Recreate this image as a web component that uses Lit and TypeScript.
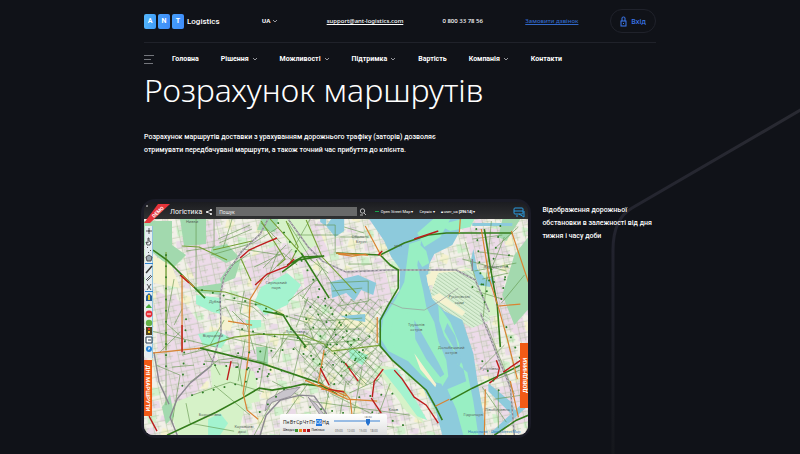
import { LitElement, html, css } from "lit";
import { customElement } from "lit/decorators.js";

interface NavItem { label: string; menu?: boolean }

const NAV: NavItem[] = [
  { label: "Головна" },
  { label: "Рішення", menu: true },
  { label: "Можливості", menu: true },
  { label: "Підтримка", menu: true },
  { label: "Вартість" },
  { label: "Компанія", menu: true },
  { label: "Контакти" },
];

const chevron = html`<svg class="chevron" viewBox="0 0 6 4" aria-hidden="true"><path d="M1 1l2 2 2-2" fill="none" stroke="currentColor" stroke-width=".8"/></svg>`;

/* Traffic map of the city, drawn as layers from ground up to labels. */
@customElement("traffic-map")
export class TrafficMap extends LitElement {
  static styles = css`
    :host { display: block; }
    svg { display: block; width: 100%; height: auto; }
    .water { fill: #8dcbdc; }
    .isle { fill: #98efc3; }
    .park { fill: #a3d9ae; }
    .mint { fill: #a4f3cf; }
    .lawn { fill: #d6f2c8; }
    .pink { fill: #eddbe9; }
    .sand { fill: #f5f2d0; }
    .pale { fill: #f2f0e8; }
    .lanes { fill: none; stroke: #5f9448; stroke-width: .7; opacity: .85; }
    .rail { fill: none; stroke: #8b8790; stroke-width: 1.4; }
    .dash { fill: none; stroke: #f4f1f2; stroke-width: .6; stroke-dasharray: 2 2; }
    .olive { fill: none; stroke: #74a035; stroke-width: 1.1; }
    .green { fill: none; stroke: #347d1b; stroke-width: 1.6; }
    .orange { fill: none; stroke: #d98332; stroke-width: 1.2; }
    .red { fill: none; stroke: #bd1d1c; stroke-width: 1.4; }
    .dots { fill: none; stroke: #2f7d28; stroke-width: 1.9; stroke-dasharray: .1 11; stroke-linecap: round; }
    text { font: 4px "Noto Sans", sans-serif; fill: #56665d; text-anchor: middle; }
    .credit { fill: #2877bd; }
  `;

  render() {
    return html`<svg viewBox="0 0 384 216" role="img" aria-label="Карта дорожнього трафіку">
      <defs>
        <pattern id="blocks" width="13" height="11" patternUnits="userSpaceOnUse" patternTransform="rotate(-12)">
          <path d="M0 3h13M5 0v11M10 3v8M5 8h8" fill="none" stroke="#91b17f" stroke-width=".5" opacity=".7"/>
          <rect x="6" y="4" width="3" height="3" fill="#dfdcd6"/>
        </pattern>
        <pattern id="dense" width="7" height="6" patternUnits="userSpaceOnUse" patternTransform="rotate(38)">
          <path d="M0 2h7M3 0v6" fill="none" stroke="#5c8a48" stroke-width=".7"/>
          <circle cx="3" cy="2" r=".8" fill="#2f7228"/>
        </pattern>
        <pattern id="mottle" width="31" height="27" patternUnits="userSpaceOnUse" patternTransform="rotate(9)">
          <path d="M2 3h9l2 6-8 3z" fill="#d2f1ce"/><path d="M17 2h8v6h-9z" fill="#eadbe8"/>
          <path d="M4 17l8-2 3 7-9 2z" fill="#eadce8"/><path d="M20 14l8 2-1 8-8-1z" fill="#f5f2cf"/>
        </pattern>
        <pattern id="hatch" width="3" height="3" patternUnits="userSpaceOnUse" patternTransform="rotate(35)">
          <path d="M0 1h3" stroke="#a9c9a5" stroke-width=".7"/>
        </pattern>
      </defs>
      <rect class="pale" width="384" height="216"/>
      <rect width="384" height="216" fill="url(#mottle)"/>
      <g class="pink">
        <path d="M40 2h28l8 20 12 24-12 32-22-12-12-24z"/>
        <path d="M100 42l32-16 22 10-18 22-26 14z"/><path d="M148 4l22-4 16 36-18 8-22-22z"/>
        <path d="M12 72l28 12 20 26-8 42-38 10z"/><path d="M18 130l38-6 22 20-30 34-24 10z"/>
        <path d="M184 52l56-2 8 28-20 16-44-6z"/><path d="M158 50l26 8v30l-22-8z"/>
        <path d="M318 8l38 2 8 28-34 8z"/><path d="M338 52l36 24 10 50-24-20z"/>
        <path d="M318 98l24 4 22 58-28-4z"/><path d="M84 134l28-4 16 26-38 8z"/>
        <path d="M348 170l28-8 8 40-28 8z"/><path d="M208 168l38 8 10 30-36-6z"/>
        <path d="M298 84l14-8 22 66-8 8zM330 100l12 2 10 44-14-2z"/>
      </g>
      <rect width="384" height="216" fill="url(#blocks)"/>
      <g class="lawn">
        <path d="M130 0h34l8 26-20 12z"/><path d="M320 48l22 6 12 42-18 2z"/>
        <path d="M66 144l44 8 6 30-46 10z"/><path d="M230 146l20 2 30 56-18-12z"/>
        <path d="M24 186l54-22 24 18-8 34H34z"/>
      </g>
      <g class="park">
        <path d="M0 2h28v24l14 10-14 14-28-24z"/><path d="M36 0h26v25l-22 2z"/>
        <path d="M68 28l15-3 12 13-13 6-16-9z"/><path d="M76 60l10-14 11-7-6 20-14 6z"/>
        <path d="M52 68l26-4-1 12-26-3z"/><path d="M117 0h17l-3 13-18-2z"/>
        <path d="M358 76l12-40 14-18v72l-14 16z"/><path d="M112 128h12v18l-11-4z"/>
        <path d="M18 188l8-13 4 22-8 8z"/><path d="M358 0h18l-14 22-8-4z"/>
      </g>
      <g class="mint">
        <path d="M52 76l25 3v16l-9-2-16-8z"/><path d="M110 84l7-16 26-14 14 12-14 20-22 10z"/>
        <path d="M54 115l19-3 12 6-8 11-18-3z"/><path d="M64 200l12-6 8 10-8 12H64z"/>
        <path d="M238 151l15-2 30 52-10-4-16-22z"/><path d="M204 128l20 8-6 10-12-7z"/>
        <path d="M101 101h16v7l-12 2z"/>
      </g>
      <g class="sand">
        <path d="M286 52l44-2 6 26-34 16-12-14z"/><path d="M6 35l22 12 8 22-27-5z"/>
        <path d="M196 92l27 2 8 12-28 4z"/><path d="M76 96l14 4-4 12-12-2z"/>
      </g>
      <path d="M286 76l8-22 34-3 18 50-18 8-34-19z" fill="#d9efd4"/>
      <path d="M286 76l8-22 34-3 18 50-18 8-34-19z" fill="url(#hatch)"/>
      <rect x="160" y="80" width="78" height="86" fill="url(#dense)" opacity=".55"/>
      <g class="water">
        <path d="M225 0L240 22 247 38 256 50 255 72 243 87 235 100 236 127 249 142 277 166 291 190 298 216H341L339 195 333 161 329 134 318 101 300 92 288 80 283 62 285 45 290 35 308 26 314 15 320 0z"/>
        <path d="M187 0h13v12l-9 6-9-11z"/><path d="M329 30l4 20 9 11 8-3-4 10-12-2-8-22z"/>
        <path d="M186 63l28-7 18 8-3 12-12-5-7 11-8-8-14 5z"/>
        <path d="M328 4h40v3h-40z"/><path d="M344 164l22 18 7 14-4 1-25-25z"/><path d="M376 186l6 2-28 26h-8z"/>
        <path d="M176 0h6v7l-6-4zM196 97l25-2v8l-12-2z"/>
      </g>
      <path d="M273 14l16-14h17l-10 18-16 10zM294 6l24-6h12l-4 8-20 4z" class="isle"/>
      <path class="isle" d="M265 25l12-4-4 25 6 26 3 16 8 15 4 19 8 19 2 16-6 10-5-14-16-20-8-16-7-18-10 4-5 10 6 16 12 7 12 10 9 16-8-5-14-15-20-10-8-13 3-20 12-18 9-18z"/>
      <path class="isle" d="M249 101l16-8 10 22 14 26 10 24-8-2-16-18-22-12-8-14z"/>
      <path class="isle" d="M274 24l8 8 3 12-7 4-6-10zM294 86l12 17 9 22-2 20 10 8 6 29 5 34h-15l-7-26-9-20 19-8-4-17-18-28-5-15z"/>
      <path class="water" d="M270 101l24 42 6 12-4 3-14-18-11-20zM303 104l8 13 6 25-3 8-4-20-10-18z"/>
      <path class="sand" d="M270 134l12 17 10 14-1 3-15-18zM282 56l7-3 1 12-6 2zM287 78l8-4 26 19-3 4z"/>
      <g class="lanes">
        <path d="M0 110l40 10 32 8M22 36v150M30 60l-8 44 20 18M52 0v70M88 0l-9 29M108 10l-33 14M106 6L74 20M67 36l42-12 26-16M38 136l24-6 14 26M46 163l28-22 24-3M60 142l34 2 4 24"/>
        <path d="M101 120l-7 42M123 124l-8 48M92 136l31 8M48 176l38-13 34 10M42 184l4 20 44 8M70 166l36 30M88 92l15 15 8 28M81 80l36 6M106 34l-18 12M134 32l-10 26M110 48l29-14 14 12M98 30l38 6"/>
        <path d="M117 4l20 20M144 4l24 38M166 0l-16 28M171 6h20v28M142 26l-23 23M152 16h42M148 30l-28 31M166 40l18 14M172 40l28 44M178 50l-20 30M196 18h24M200 8l20 6M204 45h24M182 64l42-2v20l-30 5M188 72l30-3"/>
        <path d="M321 23l12 44M335 33l34 4M330 52l42-8M318 40l44 12M347 2l-8 96M332 72l26 8M338 60l26-6M360 18l-18 44M374 8l-22 20M328 20l30-4M357 84l23-28M342 105l28 70M338 148l22-22M352 160l26-10M354 171v38M338 168l24 35M350 180l34-5"/>
        <path d="M136 119l30 4 13 23M128 139l16-22 36 6M106 150l-6 26M140 113l-6 30M150 128l20 22M160 112l-12 50M128 162l32 17M134 171l-24 45M173 151l12 28M164 164l-24 34M186 166l-10 50M202 162l-10 54M218 148l-12 66M235 160l-30 14M186 174l56 28M166 182l100 14M166 199l84 9M246 164l-16 43"/>
        <path d="M70 0v28l-28 4M80 101l-14 25M82 118l50 12M92 110l42 8M12 146l24 10-8 48M28 148l22-2M36 113l-20 20M38 90l-8 16M93 84l16 4 13 12M100 72l-4 22 10 5M72 92l10-4 8 16M144 82l30-22M130 93l34 11 6 18"/>
        <path d="M156 76l34 26M164 78l-12 30M172 92l20 34M196 101l-17 31M204 105l-24 22M218 104l-38 30M226 118l-36 24M230 131l-32 22M200 121l30 30M190 133l33 33M182 141l23 25M150 96l28 6 40-3M158 110h60M156 126l63-5"/>
      </g>
      <path class="rail" d="M124 0l-8 15-18 17-18 26-4 18 1 38-10 33-21 17-13 16-7 18 8 20M144 0l20 28 14 14 24 11 42-2h68l19 10 14 32M116 216l6-20 14-15 20-5 14 1 12 17 7 22M328 40v12M336 94l20 50 10 24 4 48M10 133l5 30 10 22"/>
      <path class="dash" d="M124 0l-8 15-18 17-18 26-4 18 1 38-10 33M144 0l20 28 14 14 24 11 42-2h68l19 10 14 32M336 94l20 50 10 24 4 48"/>
      <path d="M123 181l17-10 16-3-9 9-19 6-7 9zM164 178l9 8 11 15 4 14-6-10z" fill="#c9c5cc" stroke="#858088" stroke-width=".7"/>
      <g class="olive">
        <path d="M22 33v98M38 27l17 1 28 13M54 71l27 2 23 7 20 8 16 8M108 22l-39 9M54 130l36-12 26-3 43 1 21 9 8 7 49-6M97 40l10 22M117 2l24 38-8 7M142 2l12 26-8 16M162 1l16 37 34 36M126 0l36 40"/>
      </g>
      <path d="M242 82l16 7 22 2 14-8 20-14" fill="none" stroke="#9a9c9b" stroke-width=".7"/>
      <g class="green">
        <path d="M9 31l14 10 14 14 13 13 11 11M119 92l20 4 8 13 15 19M143 46l15-8 22-1M157 34l28 45M180 37l-26 4-16 12M192 34l44 2 24-12 24-8 18-2h66M236 36l10 10 8 5v18l-10 17-8 15 0 26 12 14 17 15 17 15 10 18 6 12M340 10l6 38 7 39 3 41M23 216l49-23 26-14 17-10 13 2 18-3 13-3 20 2 14 8M56 129l61 15 59 20 7 7M306 181l22-12 32-15 24-12M350 216l22-15 12-5"/>
      </g>
      <g class="orange">
        <path d="M38 56v75M8 134l48-5M105 102l1-22 13-21M105 101v31M105 132l-6 42 4 17 11 9M38 56l12 12M194 35l14 2 14-2M221 7l16 30M84 102l24 4M192 34l32 2M233 98v26M316 0l-1 14M367 12l17 51M337 10l8 50 8 25M353 87l23-2M180 131l-6 33 28 13M161 161l42 19 30 2M177 170l22 2 7 8 4 35M373 160l-10-40-9-32M340 216l1-46M291 187l14-7M374 198l-8-36"/>
      </g>
      <g class="red">
        <path d="M96 39l9-8 18-8 10-4M111 66l12-11 20-8 7-7M38 133v-27M87 142l-4 19M176 149l9 17M234 36l4-4M270 20l24-8M250 151l8 9 12 18 12 8 12 18M201 144l13 18M228 178l2-16 9-12M345 164l8-6 2-9-3-8M359 153l22-15M5 197l8 15M227 179l10 15M184 170l16 3M36 56l9 8"/>
      </g>
      <g class="dots">
        <path d="M22 36v116M42 100l-4 72M58 71l47 12 42 16M94 134l56-4 25 13M134 4l54 87M48 176l80-20M92 148l38 8M332 10l7 76M356 7l-17 82M328 68l34-8M357 80l8-46M147 110l24 32M182 128l48-12M178 148l48-10M190 165l32-38M215 178l37-4M228 193l31 13M60 145l82 7M98 110l36 8"/>
        <path d="M166 88l50 46M174 78l42 50M162 100l40 48M140 170l-32 30M166 188l46 8M202 96l-28 52M338 142l18 32M362 108l14 32"/>
      </g>
      <g>
        <text x="48" y="4">Нивки</text><text x="132" y="65">Сирецький</text><text x="132" y="70">парк</text>
        <text x="71" y="84">Дубки</text><text x="69" y="118">Відрадний</text><text x="151" y="114">Лук’янівка</text>
        <text x="216" y="19">Оболонь</text><text x="217" y="24">Берег</text><text x="315" y="79">Русанівські</text><text x="315" y="85">сади</text>
        <text x="272" y="107">Труханів</text><text x="272" y="112">острів</text><text x="307" y="130">Долобецький</text><text x="307" y="135">острів</text>
        <text x="352" y="49">Воскресенка</text><text x="345" y="151">Русанівка</text><text x="353" y="192">Лівобережна</text><text x="329" y="197">Гідропарк</text>
        <text x="254" y="28">міст</text><text x="249" y="192">Клов</text><text x="100" y="209">Караваєві</text><text x="98" y="214">дачі</text><text x="66" y="197">Борщагівка</text>
        <text class="credit" x="350" y="214">Надіслати · OpenStreetMap</text>
      </g>
    </svg>`;
  }
}

@customElement("app-root")
export class AppRoot extends LitElement {
  static styles = css`
    :host { display: block; font-family: Roboto, "Noto Sans", sans-serif; color: #fff; }
    * { box-sizing: border-box; }
    a { color: inherit; text-decoration: none; }
    button, input { font: inherit; color: inherit; margin: 0; padding: 0; border: 0; background: none; }
    .page { position: relative; min-height: 100vh; padding: 0 18% 15px; background: #101218; overflow: hidden; }
    .route { position: absolute; top: 0; right: 0; width: 200px; height: 454px; }
    .wrap { position: relative; }
    .top { display: grid; grid-template-columns: 118fr 65fr 116fr 83fr 85fr 46fr; align-items: center; height: 43px; border-bottom: 1px solid #20222a; font: 500 6px "Noto Sans", sans-serif; }
    .top > * { min-width: 0; white-space: nowrap; justify-self: start; }
    .logo { display: flex; align-items: center; gap: 2px; font-family: Roboto, sans-serif; font-size: 8px; font-weight: 500; }
    .tile { display: grid; place-items: center; width: 12px; height: 15px; border-radius: 2px; background: linear-gradient(100deg, #55b6fa, #3e9bf8); font-size: 7px; font-weight: 700; }
    .tile + .tile { background: linear-gradient(100deg, #459df8, #3f8cfa); }
    .name { margin-left: 1px; }
    .top .lang { display: flex; align-items: center; gap: 2px; font-weight: 700; }
    .chevron { width: 6px; height: 4px; color: #bbbdc2; }
    .mail { text-decoration: underline; }
    .call { color: #3269c9; text-decoration: underline; }
    .top .login { display: flex; align-items: center; justify-content: center; gap: 4px; justify-self: stretch; height: 24px; border: 1px solid #20222b; border-radius: 12px; color: #3c7af2; font-size: 7px; }
    .lock { width: 7px; height: 11px; }
    .nav { display: flex; align-items: center; gap: 22px; height: 32px; font-size: 7px; font-weight: 700; white-space: nowrap; }
    .burger { display: grid; gap: 3px; width: 10px; margin-right: -4px; }
    .burger i { height: 1px; background: #74767c; }
    .burger i:nth-child(2) { width: 7px; }
    .burger i:nth-child(3) { width: 9px; }
    .item { display: flex; align-items: center; gap: 3px; }
    h1 { margin: 0; font: 300 32px/30px "Noto Sans", sans-serif; }
    .lead { margin: 26px 0 42px; max-width: 312px; font-size: 7px; line-height: 13px; font-weight: 500; }
    .demo { display: grid; grid-template-columns: 77fr 23fr; gap: 11px; margin: 0 -3px; }
    .frame { border: 3px solid #1b1c27; border-radius: 14px; background: #1b1c27; }
    .screen { position: relative; overflow: hidden; border-radius: 9px; background: #222; }
    .caption { margin: 5px 0 0; font-size: 7px; line-height: 13px; font-weight: 500; }
    .bar { display: flex; align-items: center; height: 17px; padding: 2px 3px 0 26px; background: linear-gradient(#1b1c20, #303132); font-size: 4px; white-space: nowrap; }
    .brand { font-size: 7px; margin-right: 4px; }
    .share { width: 6px; height: 6px; margin-right: 4px; }
    .search { flex: 1 1 0; min-width: 0; height: 9px; padding: 0 3px; background: #686969; font-size: 5px; }
    .search::placeholder { color: #eee; opacity: 1; }
    .find { width: 8px; height: 8px; margin: 0 8px 0 2px; }
    .line { width: 4px; height: 1px; background: #15a34a; margin-right: 2px; }
    .pick { margin-right: 6px; }
    .bus { width: 12px; height: 12px; margin-left: 38px; }
    .ribbon { position: absolute; top: 0; left: 0; width: 26px; height: 26px; }
    .ribbon text { font: 700 5px Roboto, sans-serif; fill: #fff; }
    .tools { position: absolute; left: 1px; top: 24px; width: 8px; height: 132px; }
    .tab { position: absolute; display: grid; place-items: center; width: 8px; background: #f15a16; font-size: 6px; font-weight: 700; writing-mode: vertical-rl; white-space: nowrap; }
    .left { left: 0; bottom: 19px; height: 56px; }
    .right { right: 0; bottom: 27px; height: 65px; transform: rotate(180deg); }
    .week { position: absolute; left: 136px; bottom: 0; width: 107px; height: 21px; padding: 2px 3px; border-radius: 2px 2px 0 0; background: linear-gradient(#fff, #dedfdf); color: #222; font-size: 5px; display: grid; grid-template-columns: 46px 1fr; gap: 3px; }
    .days { display: flex; justify-content: space-between; line-height: 7px; margin-top: 3px; }
    .on { background: #2379df; color: #fff; }
    .scale { display: flex; align-items: center; gap: 1px; font-size: 3px; line-height: 4px; margin-top: 2px; }
    .scale i { width: 3px; height: 3px; }
    .fast { background: #3c932e; } .mid { background: #ee8521; } .slow { background: #df2e20; } .jam { background: #a51220; }
    .slider { width: 50px; height: 17px; }
    .slider text { font: 3px "Noto Sans", sans-serif; fill: #666; }
  `;

  private tools() {
    return html`<svg class="tools" viewBox="0 0 8 132" aria-hidden="true">
      <path d="M0 0h8v132H0z" fill="#e6edf0"/><path d="M7.500 0v132" stroke="#8fc3df"/>
      <g fill="none" stroke="#333" stroke-width=".8">
        <path d="M4 2v6M1 5h6M3 5h2"/><path d="M3 17v-5h1v3l2 1-1 3H2l-1-3z"/><path d="M2 21l1 1M5 24l1 1M3 26l1 1"/>
        <path d="M4 29l3 2-1 4H2l-1-4z" fill="#9ca8b0"/><path d="M1 47l6-7" stroke-width="1.5"/><path d="M1 54l5-5M2 55l5-5"/><path d="M2 58l4 6M6 58l-4 6"/>
      </g>
      <path d="M0 37h8v1H0zM0 65h8v1H0z" fill="#2c83d1"/>
      <path d="M1 70l3-3 3 3v5H1z" fill="#285f96"/><path d="M3 69h2v5H3z" fill="#efca37"/>
      <path d="M1 81l3-3 3 4H1z" fill="#49ae3e"/><circle cx="4" cy="88" r="3.4" fill="#e72f37"/><path d="M2 88h4" stroke="#fff"/>
      <circle cx="4" cy="97" r="3.2" fill="#64b144"/><path d="M1 101h6v8H1z" fill="#50421e"/><path d="M3 102h2v2H3z" fill="#eb2b20"/><path d="M3 105h2v2H3z" fill="#f4cb2c"/>
      <path d="M1 111h6v6H1z" fill="#fff" stroke="#25394c"/><path d="M3 114h3" stroke="#25394c"/><circle cx="4" cy="123" r="3" fill="#2886d8"/><path d="M4 120l1 3-2 1z" fill="#fff"/>
    </svg>`;
  }

  render() {
    return html`<div class="page">
      <svg class="route" viewBox="0 0 200 454" aria-hidden="true">
        <defs><linearGradient id="fade" x1="0" y1="0" x2="0" y2="1"><stop offset="0" stop-color="#292a32"/><stop offset=".4" stop-color="#22232e"/><stop offset="1" stop-color="#15171c"/></linearGradient></defs>
        <path d="M204 108L32 208Q13 219 13 250V454" fill="none" stroke="url(#fade)" stroke-width="3"/>
      </svg>
      <div class="wrap">
        <header>
          <div class="top">
            <a class="logo" href="#"><span class="tile">A</span><span class="tile">N</span><span class="tile">T</span><span class="name">Logistics</span></a>
            <button class="lang" type="button">UA ${chevron}</button>
            <a class="mail" href="mailto:support@ant-logistics.com">support@ant-logistics.com</a>
            <a href="tel:0800337856">0 800 33 78 56</a>
            <a class="call" href="#">Замовити дзвінок</a>
            <button class="login" type="button"><svg class="lock" viewBox="0 0 7 11" fill="none" stroke="currentColor" aria-hidden="true"><rect x="1" y="5" width="5" height="5"/><path d="M2 5V2q0-1 1.500-1T5 2v3M3.500 7v1"/></svg>Вхід</button>
          </div>
          <nav class="nav">
            <button class="burger" type="button" aria-label="Меню"><i></i><i></i><i></i></button>
            ${NAV.map((n) => html`<a class="item" href="#">${n.label}${n.menu ? chevron : ""}</a>`)}
          </nav>
        </header>
        <main>
          <h1>Розрахунок маршрутів</h1>
          <p class="lead">Розрахунок маршрутів доставки з урахуванням дорожнього трафіку (заторів) дозволяє отримувати передбачувані маршрути, а також точний час прибуття до клієнта.</p>
          <section class="demo">
            <div class="frame"><div class="screen">
              <div class="bar">
                <span class="brand">Логістика</span>
                <svg class="share" viewBox="0 0 6 6" aria-hidden="true"><path d="M5 1L1 3l4 2" fill="none" stroke="#fff" stroke-width=".7"/><g fill="#fff"><circle cx="5" cy="1" r="1"/><circle cx="1" cy="3" r="1"/><circle cx="5" cy="5" r="1"/></g></svg>
                <input class="search" type="text" placeholder="Пошук" aria-label="Пошук"/>
                <svg class="find" viewBox="0 0 8 8" fill="none" stroke="#ddd" aria-hidden="true"><circle cx="3.500" cy="3" r="2.200" stroke-width=".8"/><path d="M5 5l2 2M1 7h3" stroke-width=".8"/></svg>
                <i class="line"></i><span class="pick">Open Street Map ▾</span><span class="pick">Сервіс ▾</span><span>🔒︎ user_ua <b>[29614]</b> ▾</span>
                <svg class="bus" viewBox="0 0 12 12" fill="none" stroke="#2a9be0" aria-hidden="true"><rect x="1" y="2" width="9" height="6" rx="1"/><path d="M1 5h9M3 10h2M6 8l5 3V5"/></svg>
              </div>
              <traffic-map></traffic-map>
              <svg class="ribbon" viewBox="0 0 26 26" aria-hidden="true"><path d="M14 2h12L6 21H0z" fill="#e6343a"/><path d="M2 4h2" stroke="#ddd"/><text transform="translate(10 16) rotate(-43)">DEMO</text></svg>
              ${this.tools()}
              <button class="tab left" type="button">ДНІ МАРШРУТИ</button>
              <button class="tab right" type="button">ДОВІДНИКИ</button>
              <div class="week">
                <div>
                  <div class="days"><span>Пн</span><span>Вт</span><span>Ср</span><span>Чт</span><span>Пт</span><span class="on">Сб</span><span>Нд</span></div>
                  <div class="scale">Швидко <i class="fast"></i><i class="mid"></i><i class="slow"></i><i class="jam"></i> Повільно</div>
                </div>
                <svg class="slider" viewBox="0 0 50 17" role="img" aria-label="18:30"><path d="M2 5h46" stroke="#3c83d4"/><path d="M34 3h4v4l-2 3-2-3z" fill="#2472cf"/><text x="32" y="2">18:30</text><text x="3" y="16">09:00</text><text x="15" y="16">12:00</text><text x="27" y="16">15:00</text><text x="38" y="16">18:00</text></svg>
              </div>
            </div></div>
            <p class="caption">Відображення дорожньої обстановки в залежності від дня тижня і часу доби</p>
          </section>
        </main>
      </div>
    </div>`;
  }
}
